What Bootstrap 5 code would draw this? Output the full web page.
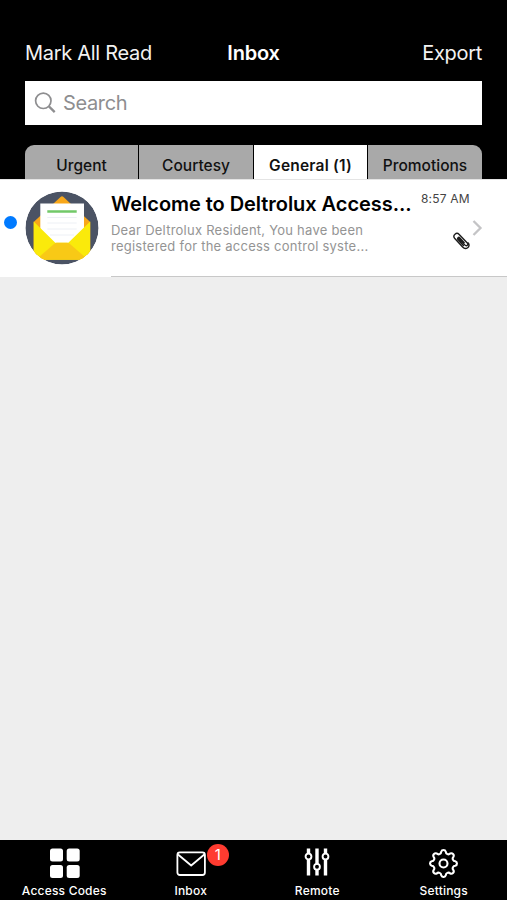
<!DOCTYPE html>
<html lang="en">
<head>
<meta charset="utf-8">
<meta name="viewport" content="width=device-width, initial-scale=1">
<title>Inbox</title>
<link href="https://cdn.jsdelivr.net/npm/bootstrap@5.3.0/dist/css/bootstrap.min.css" rel="stylesheet">
<style>
body{font-family:Inter,"Liberation Sans",sans-serif;background:#eee;height:900px;overflow:hidden}
svg{display:block;flex:none}
.top-area{height:179px;padding:37px 25px 0}
.title-row{height:31px;font-size:20px;line-height:32px;display:grid;grid-template-columns:1fr auto 1fr;color:#f2f2f2}
.title-row span,.title-row h1{white-space:nowrap}
.title-row h1{font-size:20px;line-height:32px;font-weight:600;letter-spacing:-.2px;color:#fff}
.act{letter-spacing:-.3px}
.search-box{height:44px;margin-top:12.5px;padding-left:9px;background:#fff;color:#8e8e90;font-size:20px;letter-spacing:-.35px}
.tabs{height:35px;margin-top:20.5px;border-radius:9px 9px 0 0;overflow:hidden;gap:1px}
.tab{background:#a9a9a9;color:#111;font-size:15.5px;font-weight:500;padding-top:6px;white-space:nowrap}
.tab.on{background:#fff;font-weight:600;letter-spacing:.2px}
.message{height:98px;background:#fff;border-top:1px solid #e4e4e4}
.unread{width:13px;height:13px;background:#007aff;margin:36px 0 0 4px;flex:none}
.avatar{margin:11px 0 0 8px}
.msg-body{margin-left:12px;width:396px;border-bottom:1px solid #c8c8c8;height:97px}
.msg-text{width:302px;padding-top:10px;flex:none}
.subject{font-size:20px;line-height:28px;font-weight:600;color:#000;letter-spacing:-.05px;white-space:nowrap}
.preview{font-size:13px;line-height:16px;color:#949494;letter-spacing:.24px;margin-top:4px;white-space:nowrap}
.msg-meta{margin-left:8px;width:51px;padding-top:11px;flex:none}
.time{font-size:12px;line-height:16px;color:#444;letter-spacing:.2px;white-space:nowrap}
.clip{margin:25px 0 0 32px}
.bottom-nav{height:60px;background:#000;color:#fff;font-size:12px;padding:8px 0 0 1px}
.bottom-nav .item{flex:1 1 0;white-space:nowrap}
.item .ico{height:31px}
.item .cap{line-height:16px;margin-top:4px;letter-spacing:.2px;font-weight:500}
.count{position:absolute;left:31px;top:-4px;width:22px;height:22px;background:#ff3b30;font-size:15px;line-height:22px;text-align:center}
</style>
</head>
<body class="d-flex flex-column">
<header class="top-area bg-black">
  <div class="title-row"><span class="act">Mark All Read</span><h1 class="m-0">Inbox</h1><span class="act text-end">Export</span></div>
  <div class="search-box d-flex align-items-center">
    <svg width="22" height="22" viewBox="0 0 22 22" fill="none" stroke="#8e8e90"><circle cx="9.3" cy="8.800" r="7.700" stroke-width="1.700"/><path d="M14.900 14.400l5.800 5.700" stroke-width="2.300"/></svg>
    <span style="margin-left:7px">Search</span>
  </div>
  <nav class="tabs d-flex">
    <div class="tab d-flex align-items-center justify-content-center" style="width:113px">Urgent</div>
    <div class="tab d-flex align-items-center justify-content-center" style="width:114px">Courtesy</div>
    <div class="tab on d-flex align-items-center justify-content-center" style="width:113px">General (1)</div>
    <div class="tab d-flex align-items-center justify-content-center" style="width:114px">Promotions</div>
  </nav>
</header>
<main class="flex-grow-1">
  <article class="message d-flex">
    <span class="unread rounded-circle"></span>
    <svg class="avatar" width="74" height="74" viewBox="0 0 74 74">
      <defs><clipPath id="disc"><circle cx="37" cy="37" r="36.600"/></clipPath></defs>
      <g clip-path="url(#disc)">
      <circle cx="37" cy="37" r="36.600" fill="#4b5364"/>
      <path d="M8.700 31L35.500 6Q37 4.700 38.500 6L65.200 31V68H8.700z" fill="#f8a71a"/>
      <path d="M15.300 12.500H59V56H15.300z" fill="#fff"/>
      <path d="M22.300 20.500H51.700" stroke="#72c968" stroke-width="2.300"/>
      <path d="M22.300 26.500H51.700M22.300 32H51.700M22.300 38H51.700M25 44h24" stroke="#edf0f5" stroke-width="1"/>
      <path d="M8.700 30.500L30.300 51.700H43.300L65.200 30.500V68.700H8.700z" fill="#faea0b"/>
      <path d="M11 68.700L29 53Q30.300 51.700 32 51.700H42Q43.500 51.700 45 53L63 68.700z" fill="#f8c916"/>
      </g>
    </svg>
    <div class="msg-body d-flex">
      <div class="msg-text"><div class="subject">Welcome to Deltrolux Access...</div><div class="preview">Dear Deltrolux Resident, You have been<br>registered for the access control syste...</div></div>
      <div class="msg-meta"><div class="time">8:57 AM</div>
        <svg class="clip" width="17" height="18" viewBox="0 0 17 18" fill="none" stroke="#1d1d1d" stroke-width="1.400" stroke-linecap="round"><path d="M5.200 5.700L12 13.100C13.600 14.800 15.800 12.600 14.300 10.900L6.200 2.400C3.400-.3-.7 3.200 1.600 6.200L9.600 15C12.800 18.600 18.100 14.600 15.200 10.900M11.200 10.600L6.900 5.900C5.600 4.600 3.900 6.100 5 7.500L10.500 13.600"/></svg>
      </div>
      <svg width="12" height="18" viewBox="0 0 12 18" style="margin-top:39px" fill="none" stroke="#c4c4c6" stroke-width="2.300"><path d="M1.500 2L8.500 9L1.500 16"/></svg>
    </div>
  </article>
</main>
<nav class="bottom-nav d-flex text-center">
  <div class="item"><div class="ico d-flex justify-content-center"><svg width="30" height="30" viewBox="0 0 30 30" fill="#fff" style="margin-left:2px"><rect y=".5" width="13" height="13" rx="2.500"/><rect x="16.700" y=".5" width="13" height="13" rx="2.500"/><rect y="17" width="13" height="13" rx="2.500"/><rect x="16.700" y="17" width="13" height="13" rx="2.500"/></svg></div><div class="cap">Access Codes</div></div>
  <div class="item"><div class="ico d-flex justify-content-center"><div class="position-relative"><svg width="30" height="30" viewBox="0 0 30 30" fill="none" stroke="#fff" stroke-width="1.800" stroke-linejoin="round"><rect x="1.400" y="4.400" width="27.500" height="22.600" rx="2.500"/><path d="M2 6.500L15.200 17.500L28.300 6.500"/></svg><span class="count rounded-circle">1</span></div></div><div class="cap">Inbox</div></div>
  <div class="item"><div class="ico d-flex justify-content-center"><svg width="26" height="30" viewBox="0 0 26 30" fill="none" stroke="#fff"><path d="M4.500 .5V6M4.500 11V27.500M13 .5V16.500M13 21.500V27.500M21.500 .5V6M21.500 11V27.500" stroke-width="3.400"/><g stroke-width="1.900"><circle cx="4.500" cy="8.500" r="2.900"/><circle cx="13" cy="18.800" r="2.900"/><circle cx="21.500" cy="8.500" r="2.900"/></g></svg></div><div class="cap">Remote</div></div>
  <div class="item"><div class="ico d-flex justify-content-center"><svg width="30" height="30" viewBox="-14.500 -15.500 30 30" fill="none" stroke="#fff" stroke-width="2.100"><path d="M-2.290-11.780A2.400 2.400 0 0 1 2.290-11.780A2.600 2.600 0 0 0 6.710-9.950A2.400 2.400 0 0 1 9.950-6.710A2.600 2.600 0 0 0 11.780-2.290A2.400 2.400 0 0 1 11.780 2.290A2.600 2.600 0 0 0 9.950 6.710A2.400 2.400 0 0 1 6.710 9.950A2.600 2.600 0 0 0 2.290 11.780A2.400 2.400 0 0 1-2.290 11.780A2.600 2.600 0 0 0-6.710 9.950A2.400 2.400 0 0 1-9.950 6.710A2.600 2.600 0 0 0-11.780 2.290A2.400 2.400 0 0 1-11.780-2.290A2.600 2.600 0 0 0-9.950-6.710A2.400 2.400 0 0 1-6.710-9.950A2.600 2.600 0 0 0-2.290-11.780z"/><circle r="4"/></svg></div><div class="cap">Settings</div></div>
</nav>
<script src="https://cdn.jsdelivr.net/npm/bootstrap@5.3.0/dist/js/bootstrap.bundle.min.js"></script>
</body>
</html>
